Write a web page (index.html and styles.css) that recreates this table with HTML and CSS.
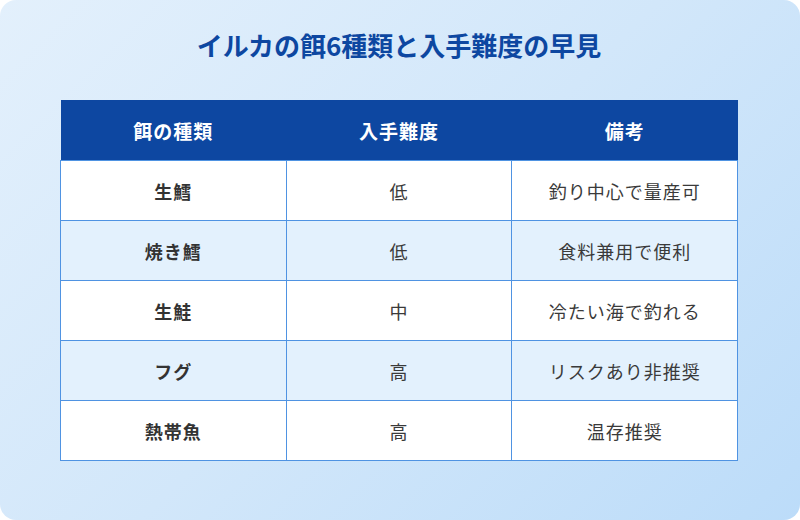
FILE: index.html
```html
<!DOCTYPE html>
<html lang="ja">
<head>
<meta charset="utf-8">
<link rel="stylesheet" href="styles.css">
</head>
<body>
<div class="card">
  <h1 class="title">イルカの餌6種類と入手難度の早見</h1>
  <table class="bait">
    <thead>
      <tr><th>餌の種類</th><th>入手難度</th><th>備考</th></tr>
    </thead>
    <tbody>
      <tr><td class="name">生鱈</td><td>低</td><td>釣り中心で量産可</td></tr>
      <tr class="alt"><td class="name">焼き鱈</td><td>低</td><td>食料兼用で便利</td></tr>
      <tr><td class="name">生鮭</td><td>中</td><td>冷たい海で釣れる</td></tr>
      <tr class="alt"><td class="name">フグ</td><td>高</td><td>リスクあり非推奨</td></tr>
      <tr><td class="name">熱帯魚</td><td>高</td><td>温存推奨</td></tr>
    </tbody>
  </table>
</div>
</body>
</html>
```
FILE: styles.css
```css
html, body {
  margin: 0;
  padding: 0;
  background: #ffffff;
}
.card {
  box-sizing: border-box;
  width: 800px;
  height: 520px;
  border-radius: 16px;
  background: linear-gradient(135deg, #e3f0fc 0%, #d2e7fa 50%, #bcdcf9 100%);
  padding: 26px 62px 0 60px;
  font-family: "Noto Sans CJK JP", "Noto Sans", sans-serif;
}
.title {
  margin: 0 0 36px 0;
  text-align: center;
  font-size: 26px;
  line-height: 38px;
  font-weight: 700;
  color: #0d47a1;
}
.bait {
  width: 678px;
  border-collapse: collapse;
  table-layout: fixed;
  font-size: 18px;
  letter-spacing: 1px;
  color: #3a3a3a;
}
.bait th {
  height: 60px;
  padding: 0;
  background: #0d47a1;
  color: #ffffff;
  font-size: 19px;
  font-weight: 700;
  text-align: center;
  border: none;
}
.bait td {
  height: 59px;
  padding: 0;
  text-align: center;
  background: #ffffff;
  border: 1px solid #4f93e2;
}
.bait tr.alt td {
  background: #e3f1fd;
}
.bait td.name {
  font-weight: 700;
  color: #333333;
}
```
